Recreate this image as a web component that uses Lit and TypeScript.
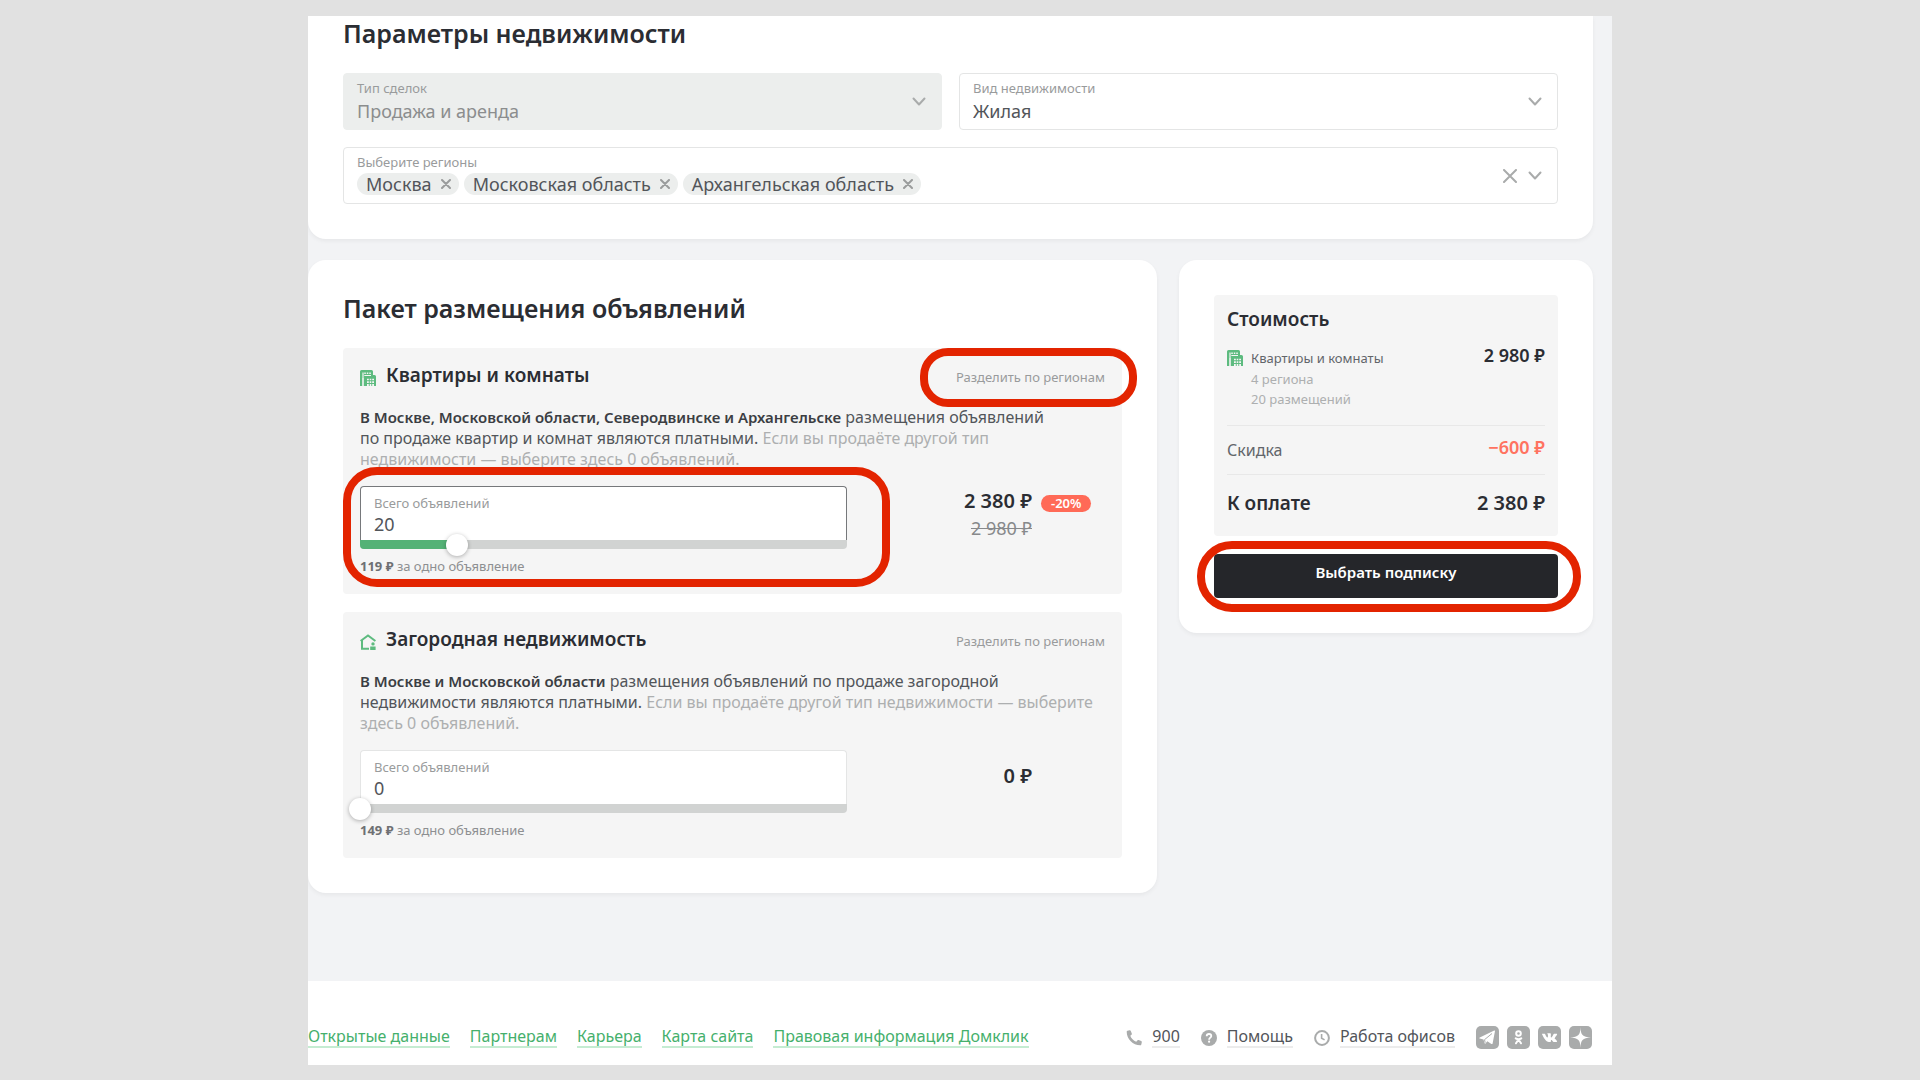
import { LitElement, html, css, svg, nothing } from "lit";
import { customElement, property, state } from "lit/decorators.js";

const base = css`
  :host { display: block; box-sizing: border-box; }
  *, *::before, *::after { box-sizing: border-box; }
  h2, h3, p, ul, dl, dd, dt { margin: 0; padding: 0; }
  h2, h3 { font-weight: 600; color: #2b2d33; }
  ul { list-style: none; }
  button, input, select { font: inherit; color: inherit; margin: 0; }
  button { background: none; border: 0; padding: 0; cursor: pointer; }
  svg { display: block; flex: none; }
`;

const icons = {
  chevron: html`<svg width="14" height="14" viewBox="0 0 14 14" fill="none" stroke="#a9abab" stroke-width="2" stroke-linecap="round" stroke-linejoin="round" aria-hidden="true"><path d="M1.500 3.500 7 9.500l5.500-6"/></svg>`,
  clear: html`<svg width="14" height="14" viewBox="0 0 14 14" fill="none" stroke="#a9abab" stroke-width="2" stroke-linecap="round" aria-hidden="true"><path d="M1 1l12 12M13 1 1 13"/></svg>`,
  remove: html`<svg width="10" height="10" viewBox="0 0 10 10" fill="none" stroke="#9a9c9c" stroke-width="2" stroke-linecap="round" aria-hidden="true"><path d="M1 1l8 8M9 1 1 9"/></svg>`,
  flats: html`<svg width="16" height="16" viewBox="0 0 16 16" fill="none" aria-hidden="true"><path fill="#5dbb7f" d="M1.500 0h10A1.500 1.500 0 0 1 13 1.500V5h1.500A1.500 1.500 0 0 1 16 6.500V16H4.500V2.500H2.500V16H0V1.500A1.500 1.500 0 0 1 1.500 0z"/><path fill="#5dbb7f" d="M2 2h4v14H3.500V8H2z"/><path stroke="#f5f5f5" stroke-width="1.200" d="M3 16V2.600"/><path fill="#f5f5f5" d="M4.300 2.500h1.500v1.500H4.300zM6.800 2.500h1.500v1.500H6.800zM9.300 2.500h1.500v1.500H9.300zM4.300 5H11v1H4.300zM7 8.700h1.800v1.600H7zM9.700 8.700h1.600v1.600H9.700zM12.200 8.700H14v1.600h-1.800zM7 11.300h1.800v1.600H7zM9.700 11.300h1.600v1.600H9.700zM12.200 11.300H14v1.600h-1.800zM7 14h1.800v2H7zM9.700 14h1.600v2H9.700zM12.200 14H14v2h-1.800z"/></svg>`,
  house: html`<svg width="16" height="16" viewBox="0 0 16 16" fill="none" aria-hidden="true"><path stroke="#5dbb7f" stroke-width="2" d="M9 14.700H2V6.200M.6 7 8 1.400 15.400 7"/><path fill="#5dbb7f" d="M13 8.200a1.700 1.700 0 0 1 1.700 1.700A1.700 1.700 0 0 1 13 11.600a1.700 1.700 0 0 1-1.700-1.700A1.700 1.700 0 0 1 13 8.200zM10.200 12.400h5.400V16h-5.400z"/></svg>`,
  phone: html`<svg width="16" height="16" viewBox="0 0 16 16" aria-hidden="true"><path fill="#a9abab" d="M1.500.8 3.600.3c.5-.1 1 .1 1.200.6l1 2.600c.2.400.1.900-.3 1.200L4.300 5.800c.9 2.600 3.200 4.900 5.900 5.900l1.200-1.300c.3-.3.800-.4 1.200-.3l2.600 1c.5.200.7.700.6 1.200l-.5 2.100c-.1.500-.5.900-1.100.9C7 15.300.7 9 .7 1.800c0-.5.3-.9.800-1z"/></svg>`,
  help: html`<svg width="16" height="16" viewBox="0 0 16 16" fill="none" aria-hidden="true"><circle cx="8" cy="8" r="8" fill="#a9abab"/><path stroke="#fff" stroke-width="1.800" d="M5.700 6.200C5.700 4.700 6.700 4 8 4s2.300.8 2.300 2c0 1.700-2.200 1.700-2.200 3.700"/><circle cx="8.100" cy="11.700" r="1.100" fill="#fff"/></svg>`,
  clock: html`<svg width="16" height="16" viewBox="0 0 16 16" fill="none" stroke="#a9abab" stroke-width="2" aria-hidden="true"><circle cx="8" cy="8" r="6.900"/><path stroke-width="1.600" d="M7.600 4v4.300l3 1.600"/></svg>`,
};

const tile = (shape: unknown) =>
  html`<svg width="23" height="23" viewBox="0 0 23 23" aria-hidden="true"><rect width="23" height="23" rx="5" fill="#a9abab"/>${shape}</svg>`;

const socials = [
  { name: "Telegram", icon: tile(svg`<path fill="#fff" d="M19 5 16.600 17.500c-.1.600-.7.700-1.200.4l-4.100-2.700-1.800 2.300c-.3.300-.8.200-.9-.3L7.500 13.500l-3.700-1c-.6-.2-.6-.8 0-1.100L18.200 4.600c.5-.2.900 0 .8.400z"/><path stroke="#a9abab" stroke-width="1" fill="none" d="M16 7.500 8.500 13.700l.7 3"/>`) },
  { name: "Одноклассники", icon: tile(svg`<g fill="none" stroke="#fff" stroke-width="2" stroke-linecap="round"><circle cx="11.500" cy="7.500" r="2.300"/><path d="M8.700 12.300c1.800 1.200 3.800 1.200 5.600 0M11.500 13.500 9 17.300M11.500 13.500l2.500 3.800"/></g>`) },
  { name: "ВКонтакте", icon: tile(svg`<path fill="#fff" transform="translate(4 4) scale(.63)" d="M13.162 18.994c.609 0 .858-.406.851-.915-.031-1.917.714-2.949 2.059-1.604 1.488 1.488 1.796 2.519 3.603 2.519h3.200c.808 0 1.126-.260 1.126-.668 0-.863-1.421-2.386-2.625-3.504-1.686-1.565-1.765-1.602-.313-3.486 1.801-2.339 4.157-5.336 2.073-5.336h-3.981c-.772 0-.828.435-1.103 1.083-.995 2.347-2.886 5.387-3.604 4.922-.751-.485-.407-2.406-.350-5.261.015-.754.011-1.271-1.141-1.539-.629-.145-1.241-.205-1.809-.205-2.273 0-3.841.953-2.950 1.119 1.571.293 1.420 3.692 1.054 5.160-.638 2.556-3.036-2.024-4.035-4.305-.241-.548-.315-.974-1.175-.974h-3.255c-.492 0-.787.160-.787.516 0 .602 2.960 6.720 5.786 9.770 2.756 2.975 5.480 2.708 7.376 2.708z"/>`) },
  { name: "Дзен", icon: tile(svg`<path fill="#fff" d="M11.500 1c.2 8 2 10 10.500 10.500-8.500.5-10.300 2.500-10.500 10.500-.2-8-2-10-10.500-10.500C9.500 11 11.300 9 11.500 1z"/>`) },
];

@customElement("select-field")
class SelectField extends LitElement {
  @property() label = "";
  @property() value = "";
  @property({ type: Boolean }) locked = false;

  static styles = [base, css`
    .field {
      display: grid; grid-template-columns: 1fr auto; align-items: center;
      border: 1px solid #e4e5e5; border-radius: 4px; background: #fff; color: #52555a;
    }
    .field.locked { background: #eceeed; border-color: #eceeed; color: #8b8d8e; }
    label {
      grid-area: 1 / 1; align-self: start; padding: 5px 13px 0;
      font-size: 13px; line-height: 18px; color: #999b9c; pointer-events: none; z-index: 1;
    }
    select {
      grid-area: 1 / 1 / 2 / 3; appearance: none; width: 100%; opacity: 1;
      border: 0; border-radius: 4px; background: transparent; outline: none;
      padding: 25px 13px 6px; font-size: 18px; line-height: 24px;
    }
    svg { grid-area: 1 / 2; margin-right: 15px; pointer-events: none; }
  `];

  render() {
    return html`<div class="field ${this.locked ? "locked" : ""}">
      <select id="s" ?disabled=${this.locked}><option>${this.value}</option></select>
      <label for="s">${this.label}</label>
      ${icons.chevron}
    </div>`;
  }
}

@customElement("regions-field")
class RegionsField extends LitElement {
  @state() regions = ["Москва", "Московская область", "Архангельская область"];

  static styles = [base, css`
    .field {
      display: flex; align-items: center; gap: 11px; padding: 4px 15px 8px 13px;
      border: 1px solid #e4e5e5; border-radius: 4px; background: #fff;
    }
    .main { flex: 1; min-width: 0; }
    .label { margin-bottom: 1px; font-size: 13px; line-height: 20px; color: #999b9c; }
    ul { display: flex; flex-wrap: wrap; gap: 5px; }
    li {
      display: flex; align-items: center; gap: 9px; padding: 0 8px 0 9px; height: 22px;
      border-radius: 11px; background: #eceeed; color: #52555a; font-size: 18px; line-height: 22px;
    }
    .field > button { margin-top: 4px; }
  `];

  render() {
    return html`<div class="field" role="group" aria-labelledby="l">
      <div class="main">
        <div class="label" id="l">Выберите регионы</div>
        <ul>${this.regions.map((r) => html`<li>${r}<button aria-label="Убрать: ${r}" @click=${() => (this.regions = this.regions.filter((x) => x !== r))}>${icons.remove}</button></li>`)}</ul>
      </div>
      <button aria-label="Очистить" @click=${() => (this.regions = [])}>${icons.clear}</button>
      <button aria-label="Открыть список">${icons.chevron}</button>
    </div>`;
  }
}

@customElement("package-box")
class PackageBox extends LitElement {
  @property() heading = "";
  @property() icon: "flats" | "house" = "flats";
  @property() places = "";
  @property() about = "";
  @property() rest = "";
  @property({ type: Number }) count = 0;
  @property() unit = "";
  @property() price = "";
  @property() oldPrice = "";
  @property() discount = "";
  @property({ type: Boolean }) marked = false;

  static styles = [base, css`
    .box { padding: 14px 17px 18px; border-radius: 4px; background: #f5f5f5; }
    header { display: flex; align-items: center; justify-content: space-between; }
    .name { display: flex; align-items: center; gap: 10px; }
    .name svg { margin-top: 7px; }
    h3 { font-size: 19px; line-height: 24px; }
    .ring-anchor { position: relative; padding-top: 3px; }
    .split { font-size: 13px; line-height: 20px; color: #999b9c; }
    .ring { position: absolute; border: 8px solid #e32400; pointer-events: none; z-index: 2; }
    .ring-split { inset: -14px -32px -20px -36px; border-radius: 28px; }
    .ring-count { inset: -19px -43px -11px -17px; border-radius: 34px; }
    .desc { margin: 20px 8px 16px 0; font-size: 16px; line-height: 21px; color: #adafb0; }
    .desc span { color: #52555a; }
    .desc strong { font-weight: 600; font-size: 15px; color: #3b3e43; }
    .row { display: grid; grid-template-columns: 487fr 258fr; align-items: start; }
    .count { position: relative; }
    .entry { border: 1px solid #e4e5e5; border-bottom: 0; border-radius: 4px 4px 0 0; background: #fff; display: grid; }
    .marked .entry { border-color: #76787b; }
    .entry label { grid-area: 1 / 1; padding: 6px 13px 0; font-size: 13px; line-height: 20px; color: #999b9c; pointer-events: none; z-index: 1; }
    .entry input {
      grid-area: 1 / 1; width: 100%; border: 0; outline: none; background: transparent;
      padding: 25px 13px 4px; height: 53px; font-size: 18px; line-height: 24px; color: #52555a;
      appearance: textfield;
    }
    .slider { display: grid; grid-template-rows: 9px; align-items: center; }
    .track { grid-area: 1 / 1; height: 9px; border-radius: 0 0 4px 4px; background: #d1d3d2; overflow: hidden; }
    .fill { height: 100%; background: #54b276; }
    .slider input {
      grid-area: 1 / 1; appearance: none; background: transparent; height: 22px;
      width: calc(100% + 22px); margin: 0 -11px; cursor: pointer; z-index: 1;
    }
    .slider input::-webkit-slider-thumb {
      appearance: none; width: 22px; height: 22px; border-radius: 50%; background: #fff;
      box-shadow: 0 1px 4px rgba(0, 0, 0, 0.3);
    }
    .unit { margin-top: 7px; font-size: 13px; line-height: 20px; color: #8d8f91; }
    .unit b { font-weight: 700; color: #6e7073; }
    .price { display: grid; grid-template-columns: auto 64px; column-gap: 9px; align-items: center; justify-content: end; justify-items: end; padding-top: 2px; }
    .price.single { padding-top: 13px; }
    .now { font-size: 20px; line-height: 26px; font-weight: 600; color: #2b2d33; }
    .badge { justify-self: start; margin-top: 5px; padding: 0 10px; border-radius: 9px; background: #ff6a57; color: #fff; font-size: 13px; line-height: 17px; font-weight: 600; }
    .old { font-size: 18px; line-height: 28px; color: #87898b; }
  `];

  render() {
    const ring = (cls: string) => (this.marked ? html`<div class="ring ${cls}"></div>` : nothing);
    return html`<section class="box ${this.marked ? "marked" : ""}">
      <header>
        <div class="name">${icons[this.icon]}<h3>${this.heading}</h3></div>
        <div class="ring-anchor"><button class="split">Разделить по регионам</button>${ring("ring-split")}</div>
      </header>
      <p class="desc"><span><strong>${this.places}</strong> ${this.about}</span> ${this.rest}</p>
      <div class="row">
        <div class="count">
          <div class="entry">
            <input id="n" type="number" .value=${String(this.count)} @input=${(e: Event) => (this.count = +(e.target as HTMLInputElement).value)} />
            <label for="n">Всего объявлений</label>
          </div>
          <div class="slider">
            <div class="track"><div class="fill" style="width:${this.count}%"></div></div>
            <input type="range" min="0" max="100" aria-label="Всего объявлений" .value=${String(this.count)} @input=${(e: Event) => (this.count = +(e.target as HTMLInputElement).value)} />
          </div>
          <p class="unit"><b>${this.unit}</b> за одно объявление</p>
          ${ring("ring-count")}
        </div>
        <div class="price ${this.oldPrice ? "" : "single"}">
          <span class="now">${this.price}</span>
          ${this.discount ? html`<span class="badge">${this.discount}</span>` : html`<span></span>`}
          ${this.oldPrice ? html`<s class="old">${this.oldPrice}</s>` : nothing}
        </div>
      </div>
    </section>`;
  }
}

@customElement("cost-summary")
class CostSummary extends LitElement {
  static styles = [base, css`
    .box { padding: 11px 13px 20px; border-radius: 4px; background: #f5f5f5; }
    h3 { font-size: 19px; line-height: 26px; }
    .line { display: flex; justify-content: space-between; align-items: flex-start; }
    .item { padding: 11px 0 16px; }
    .what { display: flex; gap: 8px; padding-top: 5px; font-size: 13px; line-height: 20px; color: #adafb0; }
    .what svg { margin-top: 2px; }
    .what dt { margin-bottom: 1px; color: #62656a; }
    .sum { font-size: 18px; line-height: 24px; font-weight: 600; color: #2b2d33; }
    .off { padding: 11px 0; border: 1px solid #e8e8e8; border-width: 1px 0; font-size: 16px; line-height: 26px; color: #62656a; }
    .off .sum { line-height: 20px; color: #ff7260; }
    .total { padding-top: 15px; font-size: 19px; line-height: 26px; font-weight: 600; color: #2b2d33; }
    .total .sum { font-size: 20px; line-height: 26px; }
    .action { position: relative; margin-top: 18px; }
    .buy { width: 100%; height: 44px; padding-bottom: 8px; border-radius: 4px; background: #25262a; color: #fff; font-size: 15px; line-height: 24px; font-weight: 600; }
    .ring { position: absolute; inset: -13px -23px -14px -17px; border: 8px solid #e32400; border-radius: 35px; pointer-events: none; }
  `];

  render() {
    return html`<div class="box">
        <h3>Стоимость</h3>
        <div class="line item">
          <div class="what">${icons.flats}<dl><dt>Квартиры и комнаты</dt><dd>4 региона</dd><dd>20 размещений</dd></dl></div>
          <span class="sum">2 980 ₽</span>
        </div>
        <div class="line off"><span>Скидка</span><span class="sum">−600 ₽</span></div>
        <div class="line total"><span>К оплате</span><span class="sum">2 380 ₽</span></div>
      </div>
      <div class="action"><button class="buy">Выбрать подписку</button><div class="ring"></div></div>`;
  }
}

@customElement("site-footer")
class SiteFooter extends LitElement {
  static styles = [base, css`
    footer { display: flex; justify-content: space-between; align-items: center; padding: 43px 20px 16px 0; background: #fff; font-size: 16px; line-height: 22px; }
    nav, .contacts, .social { display: flex; align-items: center; }
    nav { gap: 20px; }
    a { text-decoration: none; }
    nav a { color: #45b06c; border-bottom: 2px solid #c5ecd2; line-height: 20px; }
    .contacts { gap: 21px; }
    .contacts a { display: flex; align-items: center; gap: 10px; color: #52555a; }
    .contacts span { border-bottom: 2px solid #ececec; line-height: 20px; }
    .contacts svg { margin-top: 2px; }
    .social { gap: 8px; }
  `];

  render() {
    const links = ["Открытые данные", "Партнерам", "Карьера", "Карта сайта", "Правовая информация Домклик"];
    return html`<footer>
      <nav>${links.map((l) => html`<a href="#">${l}</a>`)}</nav>
      <div class="contacts">
        <a href="#">${icons.phone}<span>900</span></a>
        <a href="#">${icons.help}<span>Помощь</span></a>
        <a href="#">${icons.clock}<span>Работа офисов</span></a>
        <div class="social">${socials.map((s) => html`<button aria-label=${s.name}>${s.icon}</button>`)}</div>
      </div>
    </footer>`;
  }
}

@customElement("app-root")
class AppRoot extends LitElement {
  static styles = [base, css`
    :host { min-height: 100vh; padding: 16px 0 15px; background: #e1e1e1; font-family: "Noto Sans", "Liberation Sans", sans-serif; }
    .frame { width: 100%; max-width: 1304px; margin: 0 auto; background: #f2f3f5; overflow: hidden; }
    main { padding: 0 19px 88px 0; }
    .card { background: #fff; border-radius: 18px; box-shadow: 0 2px 4px rgba(0, 0, 0, 0.05); }
    .params { padding: 1px 35px 35px; border-radius: 0 0 18px 18px; }
    h2 { margin-bottom: 24px; font-size: 25px; line-height: 32px; font-weight: 600; }
    .pair { display: grid; grid-template-columns: 1fr 1fr; gap: 17px; margin-bottom: 17px; }
    .columns { display: grid; grid-template-columns: minmax(0, 849fr) minmax(0, 414fr); gap: 22px; align-items: start; margin-top: 21px; }
    .package { padding: 32px 35px 35px; }
    .package package-box + package-box { margin-top: 18px; }
    .cost { padding: 35px; }
  `];

  render() {
    return html`<div class="frame">
      <main>
        <section class="card params">
          <h2>Параметры недвижимости</h2>
          <div class="pair">
            <select-field label="Тип сделок" value="Продажа и аренда" locked></select-field>
            <select-field label="Вид недвижимости" value="Жилая"></select-field>
          </div>
          <regions-field></regions-field>
        </section>
        <div class="columns">
          <section class="card package">
            <h2>Пакет размещения объявлений</h2>
            <package-box marked icon="flats" heading="Квартиры и комнаты"
              places="В Москве, Московской области, Северодвинске и Архангельске"
              about="размещения объявлений по&nbsp;продаже квартир и комнат являются платными."
              rest="Если вы продаёте другой тип недвижимости — выберите здесь 0 объявлений."
              count="20" unit="119 ₽" price="2 380 ₽" oldPrice="2 980 ₽" discount="-20%"></package-box>
            <package-box icon="house" heading="Загородная недвижимость"
              places="В Москве и Московской области"
              about="размещения объявлений по продаже загородной недвижимости являются платными."
              rest="Если вы продаёте другой тип недвижимости — выберите здесь 0 объявлений."
              count="0" unit="149 ₽" price="0 ₽"></package-box>
          </section>
          <section class="card cost"><cost-summary></cost-summary></section>
        </div>
      </main>
      <site-footer></site-footer>
    </div>`;
  }
}
